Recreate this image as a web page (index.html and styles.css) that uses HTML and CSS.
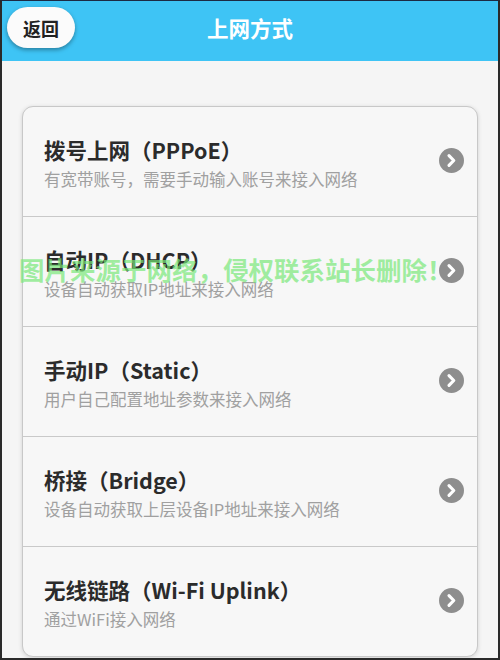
FILE: index.html
```html
<!DOCTYPE html>
<html lang="zh">
<head>
<meta charset="utf-8">
<link rel="stylesheet" href="styles.css">
</head>
<body>
<div class="frame">
  <header class="topbar">
    <button class="back">返回</button>
    <h1 class="title">上网方式</h1>
  </header>
  <main class="content">
    <ul class="card">
      <li class="row">
        <div class="texts"><div class="name">拨号上网（PPPoE）</div><div class="desc">有宽带账号，需要手动输入账号来接入网络</div></div>
        <span class="chev"><svg viewBox="0 0 24 24" width="25" height="25"><circle cx="12" cy="12" r="12" fill="#8e8e8e"/><path d="M9.6 7.4 L14.2 12 L9.6 16.6" fill="none" stroke="#fff" stroke-width="3" stroke-linecap="round" stroke-linejoin="round"/></svg></span>
      </li>
      <li class="row">
        <div class="texts"><div class="name">自动IP（DHCP）</div><div class="desc">设备自动获取IP地址来接入网络</div></div>
        <span class="chev"><svg viewBox="0 0 24 24" width="25" height="25"><circle cx="12" cy="12" r="12" fill="#8e8e8e"/><path d="M9.6 7.4 L14.2 12 L9.6 16.6" fill="none" stroke="#fff" stroke-width="3" stroke-linecap="round" stroke-linejoin="round"/></svg></span>
      </li>
      <li class="row">
        <div class="texts"><div class="name">手动IP（Static）</div><div class="desc">用户自己配置地址参数来接入网络</div></div>
        <span class="chev"><svg viewBox="0 0 24 24" width="25" height="25"><circle cx="12" cy="12" r="12" fill="#8e8e8e"/><path d="M9.6 7.4 L14.2 12 L9.6 16.6" fill="none" stroke="#fff" stroke-width="3" stroke-linecap="round" stroke-linejoin="round"/></svg></span>
      </li>
      <li class="row">
        <div class="texts"><div class="name">桥接（Bridge）</div><div class="desc">设备自动获取上层设备IP地址来接入网络</div></div>
        <span class="chev"><svg viewBox="0 0 24 24" width="25" height="25"><circle cx="12" cy="12" r="12" fill="#8e8e8e"/><path d="M9.6 7.4 L14.2 12 L9.6 16.6" fill="none" stroke="#fff" stroke-width="3" stroke-linecap="round" stroke-linejoin="round"/></svg></span>
      </li>
      <li class="row">
        <div class="texts"><div class="name">无线链路（Wi-Fi Uplink）</div><div class="desc">通过WiFi接入网络</div></div>
        <span class="chev"><svg viewBox="0 0 24 24" width="25" height="25"><circle cx="12" cy="12" r="12" fill="#8e8e8e"/><path d="M9.6 7.4 L14.2 12 L9.6 16.6" fill="none" stroke="#fff" stroke-width="3" stroke-linecap="round" stroke-linejoin="round"/></svg></span>
      </li>
    </ul>
  </main>
  <div class="watermark">图片来源于网络，侵权联系站长删除！</div>
</div>
</body>
</html>
```

FILE: styles.css
```css
* { box-sizing: border-box; }
html, body { margin: 0; padding: 0; }
body {
  width: 500px;
  height: 660px;
  overflow: hidden;
  font-family: "Noto Sans CJK SC", "Noto Sans", sans-serif;
  background: #f5f5f5;
}
.frame {
  position: relative;
  width: 500px;
  height: 660px;
  border-left: 2px solid #2a2a2a;
  border-right: 2px solid #2a2a2a;
  border-top: 1px solid #1c2a44;
  border-bottom: 2px solid #2a2a2a;
  background: #f5f5f5;
  overflow: hidden;
}
.topbar {
  height: 60px;
  background: #3ec4f5;
  display: flex;
  align-items: center;
  justify-content: center;
  position: relative;
}
.back {
  position: absolute;
  left: 5px;
  top: 6px;
  width: 68px;
  height: 41px;
  border: none;
  border-radius: 21px;
  background: #fbfbfb;
  box-shadow: 0 2px 4px rgba(0,0,0,0.35);
  font-family: "Noto Sans CJK SC", sans-serif;
  font-size: 18px;
  font-weight: 700;
  color: #222;
  padding: 0;
}
.title {
  margin: 0;
  font-size: 21.5px;
  font-weight: 700;
  color: #fff;
  line-height: 1;
  margin-top: -6px;
}
.content {
  padding: 45px 20px 0 20px;
}
.card {
  list-style: none;
  margin: 0;
  padding: 0;
  background: #f7f7f7;
  border: 1px solid #c8c8c8;
  border-radius: 11px;
  box-shadow: 0 1px 4px rgba(0,0,0,0.15);
}
.row {
  display: flex;
  align-items: center;
  padding: 29px 13px 26px 21px;
  border-bottom: 1px solid #c9c9c9;
}
.row:last-child { border-bottom: none; }
.texts { flex: 1; }
.name {
  font-size: 21.5px;
  font-weight: 700;
  color: #2b2b2b;
  line-height: 28px;
}
.desc {
  margin-top: 5px;
  font-size: 16.5px;
  color: #a0a0a0;
  line-height: 21px;
}
.chev {
  display: flex;
  width: 25px;
  height: 25px;
  margin-top: -5px;
}
.watermark {
  position: absolute;
  left: 17px;
  top: 253px;
  font-size: 25.5px;
  font-weight: 700;
  color: rgba(120, 232, 120, 0.7);
  white-space: nowrap;
  line-height: 30px;
}
```
